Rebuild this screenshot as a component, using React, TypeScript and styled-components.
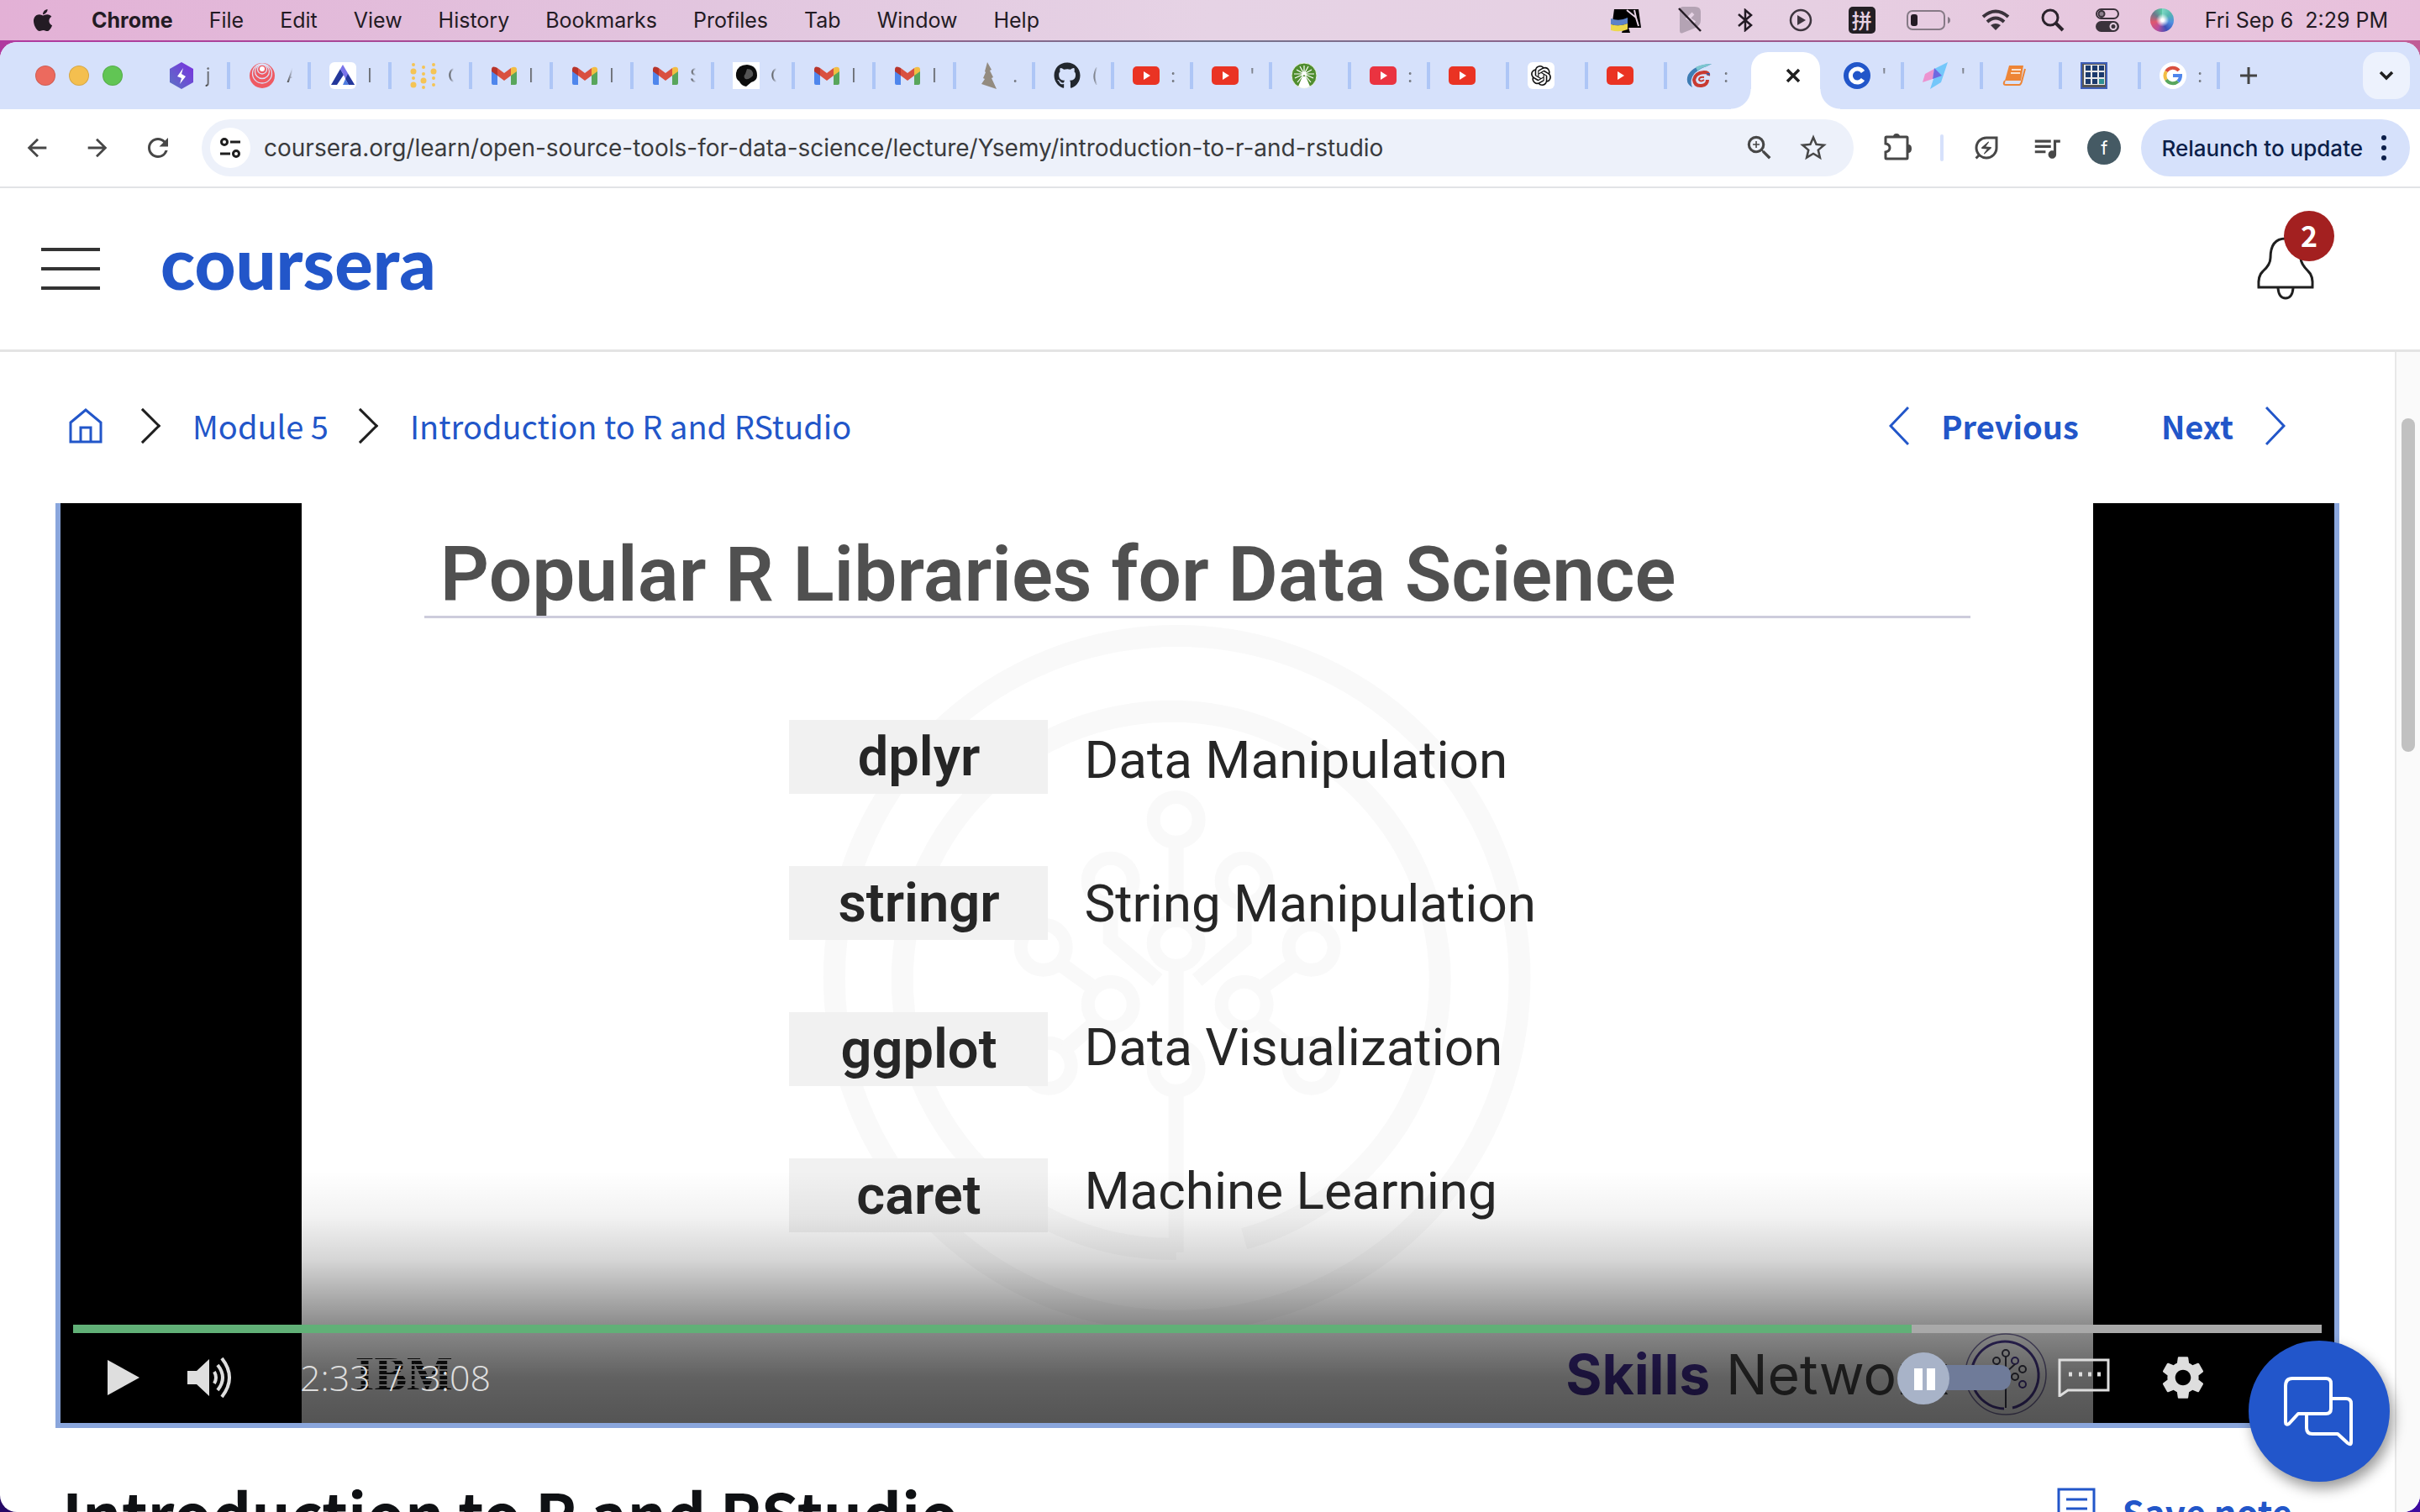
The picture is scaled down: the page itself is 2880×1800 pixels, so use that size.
import React from "react";
import styled, { createGlobalStyle } from "styled-components";
import {
  MdArrowBack,
  MdArrowForward,
  MdOutlineEnergySavingsLeaf,
  MdQueueMusic,
  MdRefresh,
  MdSettings,
  MdStarOutline,
  MdZoomIn,
} from "react-icons/md";
import { FaApple, FaGithub } from "react-icons/fa";
import { SiOpenai } from "react-icons/si";

const uiFont = `Inter, "Liberation Sans", sans-serif`;
const pageFont = `"Noto Sans CJK SC", "Noto Sans", sans-serif`;
const slideFont = `Roboto, "Noto Sans", sans-serif`;
const blue = "#2256c9";

const GlobalStyle = createGlobalStyle`
  *, *::before, *::after { box-sizing: border-box; }
  body { margin: 0; background: #2b0d6b; font-family: ${uiFont}; }
  button, input { font: inherit; color: inherit; }
  button { padding: 0; border: 0; background: none; cursor: pointer; }
  h1, h2, p, ol { margin: 0; padding: 0; }
  a { color: inherit; text-decoration: none; }
  svg { display: block; flex: none; }
`;

const Desktop = styled.div`
  height: 100vh;
  display: flex;
  flex-direction: column;
  overflow: hidden;
  background: linear-gradient(90deg, #b0399f, #a0568c 30%, #74748c 50%, #a0568c 75%, #c15c96) top / 100% 90px no-repeat,
    linear-gradient(90deg, #260a66, #3c0aa0);
`;

/* ---------- system menu bar ---------- */

const MenuBar = styled.header`
  flex: none;
  height: 48px;
  display: flex;
  align-items: center;
  justify-content: space-between;
  padding: 0 38px 0 36px;
  font-size: 25px;
  color: #231b24;
  background: linear-gradient(90deg, #e3b1d6, #e2c6df 30%, #e6d3e5 50%, #e6cfe2 75%, #e8bfdb);
`;

const MenuGroup = styled.div<{ $gap: number }>`
  display: flex;
  align-items: center;
  gap: ${(p) => p.$gap}px;
`;

const MenuItem = styled.button<{ $strong?: boolean }>`
  line-height: 32px;
  font-weight: ${(p) => (p.$strong ? 700 : 400)};
`;

const InputSource = styled.span`
  width: 32px;
  height: 32px;
  display: grid;
  place-items: center;
  border-radius: 5px;
  background: #231f24;
  color: #e8d3e4;
  font: 500 24px/32px ${pageFont};
`;

const Battery = styled.span`
  width: 46px;
  height: 24px;
  padding: 3px;
  border: 2px solid #867a86;
  border-radius: 7px;
  &::before {
    content: "";
    display: block;
    width: 8px;
    height: 14px;
    border-radius: 3px;
    background: #231b24;
  }
`;

const Siri = styled.span`
  width: 28px;
  height: 28px;
  border-radius: 50%;
  background: radial-gradient(circle at 52% 50%, #fff 0 8%, transparent 38%),
    conic-gradient(#7fd9c4, #55b7b0, #4f8fe0, #3d4fb8, #b84e9c, #e0566e, #6b7a8c, #58c8a6);
`;

/* ---------- browser chrome ---------- */

const BrowserWindow = styled.div`
  flex: 1;
  min-height: 0;
  margin-top: 2px;
  display: flex;
  flex-direction: column;
  overflow: hidden;
  border-radius: 20px;
  background: #fff;
`;

const TabStrip = styled.div`
  flex: none;
  height: 80px;
  display: flex;
  align-items: center;
  padding: 0 12px 0 42px;
  background: #d6e1fb;
`;

const WindowButtons = styled.div`
  display: flex;
  gap: 16px;
  margin-right: 32px;
`;

const WindowButton = styled.button<{ $color: string }>`
  width: 24px;
  height: 24px;
  border-radius: 50%;
  border: 1px solid rgba(0, 0, 0, 0.12);
  background: ${(p) => p.$color};
`;

const TabButton = styled.button<{ $wide?: boolean; $divider: boolean }>`
  width: ${(p) => (p.$wide ? 96 : 94)}px;
  height: 32px;
  display: flex;
  align-items: center;
  gap: 10px;
  padding-left: 22px;
  border-right: 4px solid ${(p) => (p.$divider ? "#aec6f6" : "transparent")};
`;

const TabTitle = styled.span`
  width: 10px;
  overflow: hidden;
  padding-left: 3px;
  text-align: left;
  white-space: nowrap;
  font-size: 23px;
  line-height: 32px;
  color: #444;
  mask-image: linear-gradient(90deg, #000 40%, transparent);
`;

const ActiveTab = styled.div`
  align-self: flex-end;
  position: relative;
  width: 82px;
  height: 68px;
  margin: 0 6px;
  display: flex;
  align-items: center;
  justify-content: flex-end;
  padding: 0 21px 12px 0;
  border-radius: 20px 20px 0 0;
  background: #fff;
  &::before,
  &::after {
    content: "";
    position: absolute;
    bottom: 0;
    width: 24px;
    height: 24px;
  }
  &::before {
    right: 100%;
    background: radial-gradient(circle at 0 0, transparent 23px, #fff 24px);
  }
  &::after {
    left: 100%;
    background: radial-gradient(circle at 100% 0, transparent 23px, #fff 24px);
  }
`;

const NewTab = styled.button`
  width: 56px;
  display: grid;
  place-items: center;
  margin-left: 6px;
  color: #444;
`;

const TabSearch = styled.button`
  width: 56px;
  height: 56px;
  margin-left: auto;
  display: grid;
  place-items: center;
  border-radius: 18px;
  background: #edf2fd;
  color: #1f1f1f;
`;

const Toolbar = styled.div`
  flex: none;
  height: 94px;
  display: flex;
  align-items: center;
  gap: 24px;
  padding: 0 12px 0 20px;
  border-bottom: 2px solid #e2e3e6;
  color: #474747;
`;

const ToolButton = styled.button`
  width: 48px;
  height: 48px;
  display: grid;
  place-items: center;
`;

const AddressBar = styled.form`
  flex: 1;
  height: 68px;
  margin: 0 4px;
  display: flex;
  align-items: center;
  gap: 16px;
  padding: 0 24px 0 10px;
  border-radius: 34px;
  background: #edf1fa;
`;

const SiteInfo = styled(ToolButton)`
  border-radius: 50%;
  background: #fff;
  color: #1f1f1f;
`;

const AddressInput = styled.input`
  flex: 1;
  min-width: 0;
  padding: 0;
  border: 0;
  outline: 0;
  background: none;
  font-size: 28px;
  line-height: 40px;
  color: #3a3b3d;
`;

const ToolDivider = styled.span`
  width: 4px;
  height: 32px;
  margin: 0 3px;
  border-radius: 2px;
  background: #d6e1fb;
`;

const Avatar = styled(ToolButton)`
  width: 40px;
  height: 40px;
  border-radius: 50%;
  background: #455a64;
  color: #fff;
  font-size: 22px;
`;

const Relaunch = styled.button`
  height: 68px;
  display: flex;
  align-items: center;
  gap: 22px;
  padding: 0 28px 0 24px;
  border-radius: 34px;
  background: #d6e1fb;
  color: #0c1f4a;
  font-size: 26px;
  font-weight: 500;
  white-space: nowrap;
`;

/* ---------- course page ---------- */

const SiteHeader = styled.header`
  flex: none;
  height: 195px;
  display: flex;
  align-items: center;
  gap: 72px;
  padding: 0 124px 0 49px;
  border-bottom: 3px solid #e4e4e4;
`;

const MenuToggle = styled.button`
  width: 70px;
  display: flex;
  flex-direction: column;
  gap: 19px;
`;

const MenuLine = styled.span`
  height: 4px;
  background: #333;
`;

const Logo = styled.a`
  padding-bottom: 16px;
  font: 900 85px/100px Lato, sans-serif;
  color: ${blue};
`;

const Notifications = styled.button`
  position: relative;
  margin-left: auto;
  color: #1f1f1f;
`;

const Badge = styled.span`
  position: absolute;
  left: 34px;
  top: -30px;
  width: 60px;
  height: 60px;
  border-radius: 50%;
  background: #a32020;
  color: #fff;
  font: 700 34px/58px ${pageFont};
  text-align: center;
`;

const PageBody = styled.div`
  flex: 1;
  min-height: 0;
  display: flex;
  font-family: ${pageFont};
`;

const Main = styled.main`
  flex: 1;
  min-width: 0;
  overflow: hidden;
  padding: 0 66px;
`;

const ScrollTrack = styled.div`
  width: 30px;
  padding: 79px 5px 0 6px;
  border-left: 2px solid #e8e8e8;
  background: #fafafa;
`;

const ScrollThumb = styled.div`
  width: 16px;
  height: 397px;
  border-radius: 8px;
  background: #c1c1c1;
`;

const LessonNav = styled.nav`
  height: 180px;
  display: flex;
  align-items: center;
  justify-content: space-between;
  padding: 0 64px 4px 16px;
  font-size: 38px;
  line-height: 56px;
  color: ${blue};
`;

const Crumbs = styled.ol`
  display: flex;
  align-items: center;
  list-style: none;
`;

const Crumb = styled.li`
  display: flex;
  align-items: center;
  & + &::before {
    content: "";
    width: 30px;
    height: 30px;
    margin: 0 44px 0 23px;
    border: solid #1f1f1f;
    border-width: 3px 3px 0 0;
    transform: rotate(45deg);
  }
`;

const HomeLink = styled.a`
  padding-right: 10px;
`;

const Pager = styled.div`
  display: flex;
  gap: 98px;
`;

const PagerLink = styled.a`
  display: flex;
  align-items: center;
  gap: 38px;
  font-weight: 700;
`;

const Player = styled.section`
  position: relative;
  display: flex;
  justify-content: center;
  border: solid #8aa6dc;
  border-width: 0 6px 6px;
  background: #000;
`;

const Slide = styled.article`
  position: relative;
  width: 78.8%;
  aspect-ratio: 2133 / 1095;
  overflow: hidden;
  background: #fff;
  font-family: ${slideFont};
  color: #262626;
`;

const Watermark = styled.svg`
  position: absolute;
  inset: 0;
  width: 100%;
  height: 100%;
`;

const SlideTitle = styled.h2`
  position: relative;
  margin: 36px 146px 0;
  padding: 0 19px;
  border-bottom: 3px solid #cdccdc;
  font-size: 91px;
  line-height: 98px;
  font-weight: 600;
  color: #505050;
  white-space: nowrap;
`;

const Libraries = styled.div`
  position: relative;
  display: flex;
  justify-content: center;
  gap: 43px;
  padding-top: 121px;
`;

const Names = styled.ul`
  width: 308px;
  margin: 0;
  padding: 0;
  display: flex;
  flex-direction: column;
  gap: 86px;
  list-style: none;
`;

const Name = styled.li`
  background: #f1f1f1;
  font-size: 65px;
  line-height: 88px;
  font-weight: 600;
  text-align: center;
`;

const Uses = styled(Names)`
  width: 620px;
  padding-top: 4px;
  gap: 83px;
`;

const Use = styled.li`
  font-size: 62px;
  line-height: 88px;
  white-space: nowrap;
`;

const SlideFooter = styled.footer`
  position: absolute;
  left: 64px;
  right: 54px;
  bottom: 8px;
  display: flex;
  align-items: center;
`;

const Ibm = styled.span`
  margin-right: auto;
  font: 700 58px/80px "Liberation Serif", serif;
  color: transparent;
  background: repeating-linear-gradient(#1a1a1a 0 4px, transparent 4px 6px);
  background-clip: text;
`;

const Skills = styled.span`
  margin-right: 18px;
  font: 400 66px/80px ${uiFont};
  color: #474747;
  strong {
    color: #442f96;
  }
`;

const Shade = styled.div`
  position: absolute;
  inset: auto 0 0;
  height: 300px;
  background: linear-gradient(
    transparent,
    rgba(0, 0, 0, 0.05) 18%,
    rgba(0, 0, 0, 0.16) 35%,
    rgba(0, 0, 0, 0.45) 61%,
    rgba(0, 0, 0, 0.62) 82%,
    rgba(0, 0, 0, 0.67)
  );
`;

const Controls = styled.div`
  position: absolute;
  inset: auto 15px 0;
  color: #dedede;
`;

const Seek = styled.input`
  display: block;
  width: 100%;
  height: 10px;
  margin: 0;
  appearance: none;
  background: linear-gradient(90deg, #61b077 var(--played), #a9a9a9 var(--played));
  &::-webkit-slider-thumb {
    appearance: none;
    width: 0;
    height: 0;
  }
`;

const ControlRow = styled.div`
  height: 107px;
  display: flex;
  align-items: center;
  gap: 56px;
  padding: 0 134px 0 40px;
`;

const Time = styled.span`
  margin: 0 auto 0 20px;
  font: 300 43px/56px "Open Sans", sans-serif;
  white-space: pre;
`;

const AutoPlay = styled.input`
  appearance: none;
  position: relative;
  width: 104px;
  height: 30px;
  margin: 0;
  border-radius: 0 12px 12px 0;
  background: #6f7b99;
  &::before {
    content: "";
    position: absolute;
    left: -31px;
    top: -15px;
    width: 62px;
    height: 62px;
    border-radius: 50%;
    background: linear-gradient(#fff, #fff) 20px 19px / 10px 26px no-repeat,
      linear-gradient(#fff, #fff) 35px 19px / 10px 26px no-repeat, #a8b3c8;
  }
`;

const LessonHeading = styled.div`
  display: flex;
  align-items: center;
  justify-content: space-between;
  margin-top: 56px;
  padding: 0 56px 0 8px;
`;

const LessonTitle = styled.h1`
  font-size: 73px;
  line-height: 88px;
  font-weight: 700;
  color: #0f1114;
  white-space: nowrap;
`;

const SaveNote = styled.button`
  display: flex;
  align-items: center;
  gap: 32px;
  font-size: 42px;
  line-height: 56px;
  font-weight: 700;
  color: ${blue};
`;

const ChatButton = styled.button`
  position: fixed;
  right: 36px;
  bottom: 36px;
  width: 168px;
  height: 168px;
  display: grid;
  place-items: center;
  border-radius: 50%;
  background: #2256cb;
  color: #fff;
  box-shadow: 4px 8px 16px rgba(0, 0, 0, 0.4);
`;

/* ---------- favicons ---------- */

const Fav = ({ children }: { children: React.ReactNode }) => (
  <svg width="32" height="32" viewBox="0 0 32 32" fill="none">
    {children}
  </svg>
);

const Bolt = () => (
  <Fav>
    <defs>
      <linearGradient id="bolt" x1="1" y1="0" x2="0" y2="1">
        <stop stopColor="#7a2fe0" />
        <stop offset="1" stopColor="#5b73c4" />
      </linearGradient>
    </defs>
    <path d="M16 0l14 8v16l-14 8-14-8V8z" fill="url(#bolt)" />
    <path d="M18 7l-7 10 5 2-2 7 7-9-5-3z" fill="#fff" />
  </Fav>
);

const Rings = () => (
  <Fav>
    <circle cx="16" cy="16" r="15" fill="#ef5a63" />
    <g stroke="#dbe0f6" strokeWidth="1.3">
      <circle cx="16" cy="13.500" r="11.500" />
      <circle cx="16" cy="11" r="8.500" />
      <circle cx="16" cy="8.500" r="5.500" />
    </g>
    <circle cx="16" cy="8" r="3" fill="#fff" />
  </Fav>
);

const Lambda = () => (
  <Fav>
    <rect width="32" height="32" rx="6" fill="#fff" />
    <path d="M13 8l4 7-8 12H2z" fill="#24389b" />
    <path d="M16 3l14 24h-7L13 8z" fill="#7a74ea" />
    <path d="M22 14l8 13h-7l-4-7z" fill="#24389b" />
    <path d="M19 20l4 7h-7z" fill="#4f7de0" />
  </Fav>
);

const Dots = () => (
  <Fav>
    <g fill="#f5c455">
      <circle cx="4" cy="3" r="2" />
      <circle cx="4" cy="11" r="3.500" />
      <circle cx="4" cy="19" r="2" />
      <circle cx="4" cy="27" r="3.500" />
      <circle cx="16" cy="6" r="2" />
      <circle cx="16" cy="14" r="2" />
      <circle cx="16" cy="22" r="3.500" />
      <circle cx="16" cy="30" r="2" />
      <circle cx="28" cy="3" r="2" />
      <circle cx="28" cy="11" r="3.500" />
      <circle cx="28" cy="19" r="2" />
      <circle cx="28" cy="27" r="2" />
    </g>
  </Fav>
);

const Gmail = () => (
  <Fav>
    <path d="M1 9l7 5v13H3q-2 0-2-2z" fill="#4f86ec" />
    <path d="M31 9l-7 5v13h5q2 0 2-2z" fill="#58a65c" />
    <path d="M24 7l2-1q5-1 5 3v2l-7 5z" fill="#f2bd42" />
    <path d="M1 9q0-5 5-3l2 1v9l-7-5z" fill="#b8342b" />
    <path d="M8 7l8 6 8-6v9l-8 6-8-6z" fill="#d95040" />
  </Fav>
);

const Brain = () => (
  <Fav>
    <path d="M0 0h32v32H0z" fill="#fff" />
    <path d="M4 13Q6 3 17 3q12 1 12 13 0 6-7 8l-6 5q-6-1-8-6-5-3-4-10z" fill="#0c0c0c" />
    <path d="M17 8q8 0 7 8-4 5-9 4-3-3 0-6z" fill="#555" />
  </Fav>
);

const Tree = () => (
  <Fav>
    <path d="M15 0l5 9-2 1 4 8-2 1 6 13-18-6 4-6-2-1 3-7-1-1z" fill="#938b80" />
  </Fav>
);

const YouTube = ({ fill = "#ea3323" }: { fill?: string }) => (
  <Fav>
    <rect y="5" width="32" height="22" rx="5" fill={fill} />
    <path d="M13 11l8 5-8 5z" fill="#fff" />
  </Fav>
);

const Sunburst = () => (
  <Fav>
    <circle cx="16" cy="16" r="15" fill="#4f8d2f" stroke="#e9f3e2" strokeWidth="1" />
    <path
      d="M16 14V4M16 14l5-9M16 14l-5-9M16 14l9-5M16 14L7 9M16 14l12 0M16 14H4M16 14l11 5M16 14L5 19M16 14l8 10M16 14L8 24"
      stroke="#fff"
      strokeWidth="1.2"
    />
    <path d="M14 17h4l5 12q-7 4-14 0z" fill="#fff" />
  </Fav>
);

const OpenAiTile = () => (
  <Fav>
    <rect width="32" height="32" rx="6" fill="#fff" />
    <SiOpenai x="4" y="4" size={24} color="#111" />
  </Fav>
);

const Swirl = () => (
  <Fav>
    <path d="M31 2Q10 3 3 15q-4 10 5 15Q4 21 11 13q7-6 14-8z" fill="#3f7db4" />
    <path d="M31 2Q20 2 12 6l2 4q6-4 11-5z" fill="#7cc6cf" />
    <path d="M27 16q1-4-5-4-11 1-12 9 1 8 9 7 7-1 7-7" stroke="#c83a31" strokeWidth="4" />
    <path d="M22 18q-6-1-6 3 2 3 6 0" stroke="#c83a31" strokeWidth="2" />
    <path d="M24 13l5 0-1 3z" fill="#2f5aa8" />
  </Fav>
);

const CourseraTile = () => (
  <Fav>
    <circle cx="16" cy="16" r="16" fill="#2256c9" />
    <path d="M23 11.500a8 8 0 1 0 0 9" stroke="#fff" strokeWidth="5" />
  </Fav>
);

const Prism = () => (
  <Fav>
    <path d="M14 8L30 0l-8 24-13 8 5-15z" fill="#74c7fa" />
    <path d="M14 8L3 14 0 24l12-4z" fill="#ec93cf" />
    <path d="M14 7l9 9-11 4z" fill="#6f68e0" />
  </Fav>
);

const Book = () => (
  <Fav>
    <path d="M9 4h17l-3 18H4z" fill="#ee8536" />
    <path d="M12 9h11M11 13h11" stroke="#fff" strokeWidth="1.500" />
    <path d="M4 22q-3 5 1 5h16q2 0 3-4l4-15" stroke="#ee8536" strokeWidth="2" />
  </Fav>
);

const GridTile = () => (
  <Fav>
    <path d="M0 0h32v32H0z" fill="#3f5fb8" />
    <path d="M2 2h28v28H2z" fill="#555" />
    <path d="M4 3h25v24H4z" fill="#e8e8e8" />
    <path
      d="M6 4h6v6H6zM14 4h6v6h-6zM22 4h6v6h-6zM6 12h6v6H6zM14 12h6v6h-6zM22 12h6v6h-6zM6 20h6v6H6zM14 20h6v6h-6z"
      fill="#1c3a6c"
    />
    <path d="M22 20h6v6h-6z" fill="#2e8f93" />
  </Fav>
);

const Google = () => (
  <Fav>
    <circle cx="16" cy="16" r="16" fill="#fff" />
    <g strokeWidth="4">
      <path d="M23 10A9.500 9.500 0 0 0 8 11" stroke="#d95040" />
      <path d="M8 11a9.500 9.500 0 0 0 0 10" stroke="#f2bd42" />
      <path d="M8 21a9.500 9.500 0 0 0 14 2" stroke="#58a65c" />
      <path d="M22 23a9.500 9.500 0 0 0 3-7h-9" stroke="#4f86ec" />
    </g>
  </Fav>
);

type TabInfo = { icon: React.ReactNode; title: string; label: string };

const tabs: TabInfo[] = [
  { icon: <Bolt />, title: "j", label: "Editor" },
  { icon: <Rings />, title: "A", label: "Rings" },
  { icon: <Lambda />, title: "I", label: "Lambda" },
  { icon: <Dots />, title: "C", label: "Dots" },
  { icon: <Gmail />, title: "I", label: "Mail" },
  { icon: <Gmail />, title: "I", label: "Mail" },
  { icon: <Gmail />, title: "S", label: "Mail" },
  { icon: <Brain />, title: "C", label: "Brain" },
  { icon: <Gmail />, title: "I", label: "Mail" },
  { icon: <Gmail />, title: "I", label: "Mail" },
  { icon: <Tree />, title: ".", label: "Tree" },
  { icon: <FaGithub size={32} color="#22272e" />, title: "(", label: "GitHub" },
  { icon: <YouTube />, title: ":", label: "Video" },
  { icon: <YouTube />, title: "'", label: "Video" },
  { icon: <Sunburst />, title: "", label: "Sunburst" },
  { icon: <YouTube fill="#ea3340" />, title: ":", label: "Video" },
  { icon: <YouTube />, title: "", label: "Video" },
  { icon: <OpenAiTile />, title: "", label: "Assistant" },
  { icon: <YouTube />, title: "", label: "Video" },
  { icon: <Swirl />, title: ":", label: "Swirl" },
];

const laterTabs: TabInfo[] = [
  { icon: <CourseraTile />, title: "'", label: "Course" },
  { icon: <Prism />, title: "'", label: "Prism" },
  { icon: <Book />, title: "", label: "Book" },
  { icon: <GridTile />, title: "", label: "Grid" },
  { icon: <Google />, title: ":", label: "Search" },
];

const Tab = ({ tab, wide, divider }: { tab: TabInfo; wide?: boolean; divider: boolean }) => (
  <TabButton $wide={wide} $divider={divider} aria-label={tab.label}>
    {tab.icon}
    <TabTitle>{tab.title}</TabTitle>
  </TabButton>
);

/* ---------- drawings ---------- */

const Arrow = ({ left }: { left?: boolean }) => (
  <svg width="24" height="46" viewBox="0 0 24 46" fill="none" stroke="currentColor" strokeWidth="3">
    <path d={left ? "M23 1L2 23l21 22" : "M1 1l21 22L1 45"} />
  </svg>
);

const nodes = [
  [1041, 377],
  [963, 450],
  [1122, 450],
  [883, 529],
  [1041, 524],
  [1202, 529],
  [963, 597],
  [1122, 597],
  [889, 670],
  [1041, 673],
  [1202, 670],
];

const SlideMark = () => (
  <Watermark viewBox="0 0 2133 1095" fill="none" stroke="#f9f9f9" strokeWidth="22" aria-hidden="true">
    <circle cx="1042" cy="566" r="408" strokeWidth="26" />
    <path d="M1041 888A320 320 0 1 1 1122 876" strokeWidth="26" />
    {nodes.map(([x, y]) => (
      <circle key={`${x}-${y}`} cx={x} cy={y} r="27" strokeWidth="16" />
    ))}
    <path
      d="M1041 406v90M1041 553v90M1041 702v190M963 480v40l56 48M1122 480v40l-56 48M905 550l36 26M1180 550l-36 26M941 622l-32 28M1144 622l36 28"
      strokeWidth="18"
    />
  </Watermark>
);

const NetworkMark = () => (
  <svg width="100" height="100" viewBox="0 0 100 100" fill="none" stroke="#4a3a90" strokeWidth="2">
    <circle cx="50" cy="50" r="48" stroke="#7c74a4" strokeWidth="1.500" />
    <path d="M48 91A40 40 0 1 1 58 90" strokeWidth="3" />
    <g stroke="#3f3f50">
      <circle cx="50" cy="25" r="4" />
      <circle cx="39" cy="34" r="4" />
      <circle cx="61" cy="34" r="4" stroke="#4a3a90" />
      <circle cx="30" cy="44" r="4" />
      <circle cx="70" cy="44" r="4" />
      <circle cx="39" cy="53" r="4" />
      <circle cx="61" cy="53" r="4" />
      <circle cx="30" cy="62" r="4" />
      <circle cx="70" cy="62" r="4" stroke="#4a3a90" />
      <path d="M50 29v61M39 38l11 10M61 38L50 48" />
    </g>
  </svg>
);

export default function App() {
  const played = 153.7;
  const duration = 188;
  return (
    <Desktop>
      <GlobalStyle />
      <MenuBar>
        <MenuGroup $gap={43}>
          <FaApple size={30} />
          <MenuItem $strong>Chrome</MenuItem>
          {["File", "Edit", "View", "History", "Bookmarks", "Profiles", "Tab", "Window", "Help"].map((m) => (
            <MenuItem key={m}>{m}</MenuItem>
          ))}
        </MenuGroup>
        <MenuGroup $gap={37}>
          <MenuGroup $gap={43}>
            <svg width="38" height="32" viewBox="0 0 38 32">
              <path d="M5 3h29l3 22H22l2 6H14l2-6H2z" fill="#000" />
              <path d="M20 4l11 9-2-9M31 13l3 10" stroke="#e6d3e5" strokeWidth="2" fill="none" />
              <path d="M1 14q10 4 20-1v7q-10 4-20 1z" fill="#5b82c8" />
              <path d="M1 21q10 3 20-1v7q-10 4-20 1z" fill="#ecd84c" />
            </svg>
            <svg width="28" height="32" viewBox="0 0 28 32">
              <path d="M6 0h14q7 0 7 6v10q0 6-6 9L6 31q-4 2-4-3V4q0-4 4-4z" fill="#b4a3b4" />
              <path d="M18 8l-6 6 8 5" stroke="#e6d3e5" strokeWidth="4" fill="none" />
              <path d="M1 2l26 27" stroke="#231b24" strokeWidth="2.500" />
            </svg>
            <svg width="18" height="28" viewBox="0 0 18 28" fill="none" stroke="#231b24" strokeWidth="2.500">
              <path d="M1 7l15 13-7 6V2l7 6L1 21" />
            </svg>
            <svg width="28" height="28" viewBox="0 0 28 28">
              <circle cx="14" cy="14" r="12" fill="none" stroke="#3d353e" strokeWidth="2.500" />
              <path d="M10 8l10 6-10 6z" fill="#3d353e" />
            </svg>
            <InputSource>拼</InputSource>
          </MenuGroup>
          <MenuGroup $gap={3}>
            <Battery />
            <svg width="3" height="8" viewBox="0 0 3 8">
              <path d="M0 0q3 1 3 4T0 8z" fill="#867a86" />
            </svg>
          </MenuGroup>
          <svg width="34" height="26" viewBox="0 0 34 26" fill="none" stroke="#3a323b" strokeWidth="4">
            <path d="M2 9q15-13 30 0M7 15q10-9 20 0" />
            <path d="M17 25l-6-6q6-4 12 0z" fill="#3a323b" stroke="none" />
          </svg>
          <svg width="28" height="28" viewBox="0 0 28 28" fill="none" stroke="#2b232c" strokeWidth="3">
            <circle cx="11" cy="11" r="9" />
            <path d="M17 17l9 9" strokeWidth="4" />
          </svg>
          <svg width="28" height="28" viewBox="0 0 28 28" fill="none" stroke="#3a323b" strokeWidth="2">
            <rect x="1" y="1" width="26" height="11" rx="5.500" />
            <circle cx="7" cy="6.500" r="3.500" fill="#8b7f8c" />
            <rect x="1" y="16" width="26" height="11" rx="5.500" fill="#3a323b" />
            <circle cx="21" cy="21.500" r="3.500" stroke="#e6cfe2" />
          </svg>
          <Siri />
          <MenuItem>Fri Sep 6&nbsp; 2:29 PM</MenuItem>
        </MenuGroup>
      </MenuBar>

      <BrowserWindow>
        <TabStrip>
          <WindowButtons>
            <WindowButton $color="#ec6a5e" aria-label="Close window" />
            <WindowButton $color="#f4bf4f" aria-label="Minimise window" />
            <WindowButton $color="#61c554" aria-label="Zoom window" />
          </WindowButtons>
          {tabs.map((t, i) => (
            <Tab key={i} tab={t} wide={i < 10} divider={i < tabs.length - 1} />
          ))}
          <ActiveTab>
            <button aria-label="Close tab">
              <svg width="22" height="22" viewBox="0 0 22 22" stroke="#1f1f1f" strokeWidth="3.500">
                <path d="M4 4l14 14M18 4L4 18" />
              </svg>
            </button>
          </ActiveTab>
          {laterTabs.map((t, i) => (
            <Tab key={i} tab={t} divider />
          ))}
          <NewTab aria-label="New tab">
            <svg width="20" height="20" viewBox="0 0 20 20" stroke="currentColor" strokeWidth="3">
              <path d="M10 0v20M0 10h20" />
            </svg>
          </NewTab>
          <TabSearch aria-label="Search tabs">
            <svg width="18" height="12" viewBox="0 0 18 12" fill="none" stroke="currentColor" strokeWidth="3.500">
              <path d="M2 2l7 7 7-7" />
            </svg>
          </TabSearch>
        </TabStrip>

        <Toolbar>
          <ToolButton aria-label="Back">
            <MdArrowBack size={34} />
          </ToolButton>
          <ToolButton aria-label="Forward">
            <MdArrowForward size={34} />
          </ToolButton>
          <ToolButton aria-label="Reload">
            <MdRefresh size={36} />
          </ToolButton>
          <AddressBar onSubmit={(e) => e.preventDefault()}>
            <SiteInfo type="button" aria-label="Site information">
              <svg width="26" height="26" viewBox="0 0 26 26" fill="none" stroke="currentColor" strokeWidth="3">
                <circle cx="6" cy="6" r="3.500" />
                <path d="M13 6h12M1 20h12" />
                <circle cx="20" cy="20" r="3.500" />
              </svg>
            </SiteInfo>
            <AddressInput
              aria-label="Address"
              defaultValue="coursera.org/learn/open-source-tools-for-data-science/lecture/Ysemy/introduction-to-r-and-rstudio"
            />
            <ToolButton type="button" aria-label="Zoom">
              <MdZoomIn size={38} />
            </ToolButton>
            <ToolButton type="button" aria-label="Bookmark">
              <MdStarOutline size={38} />
            </ToolButton>
          </AddressBar>
          <ToolButton aria-label="Extensions">
            <svg width="34" height="34" viewBox="0 0 34 34" fill="none">
              <path
                d="M4 4h24q1 0 1 1v24q0 1-1 1H4q-1 0-1-1v-7q5-1 5-5t-5-5V5q0-1 1-1z"
                stroke="currentColor"
                strokeWidth="3"
              />
              <path d="M12 4q0-4 4-4t4 4zM30 13q4 0 4 5t-4 5z" fill="currentColor" />
            </svg>
          </ToolButton>
          <ToolDivider />
          <ToolButton aria-label="Energy saver">
            <MdOutlineEnergySavingsLeaf size={36} />
          </ToolButton>
          <ToolButton aria-label="Media">
            <MdQueueMusic size={38} />
          </ToolButton>
          <Avatar aria-label="Profile">f</Avatar>
          <Relaunch>
            Relaunch to update
            <svg width="6" height="34" viewBox="0 0 6 34" fill="currentColor">
              <circle cx="3" cy="5" r="3" />
              <circle cx="3" cy="17" r="3" />
              <circle cx="3" cy="29" r="3" />
            </svg>
          </Relaunch>
        </Toolbar>

        <SiteHeader>
          <MenuToggle aria-label="Menu">
            <MenuLine />
            <MenuLine />
            <MenuLine />
          </MenuToggle>
          <Logo href="#">coursera</Logo>
          <Notifications aria-label="Notifications, 2 unread">
            <svg width="72" height="78" viewBox="0 0 72 78" fill="none" stroke="currentColor" strokeWidth="3">
              <path d="M4 61h64q1-14-5-19-9-9-9-16Q54 3 36 3T18 26q0 8-9 16-6 5-5 19z" />
              <path d="M27 62q1 12 9 12t9-12" />
            </svg>
            <Badge>2</Badge>
          </Notifications>
        </SiteHeader>

        <PageBody>
          <Main>
            <LessonNav>
              <Crumbs>
                <Crumb>
                  <HomeLink href="#" aria-label="Home">
                    <svg width="40" height="42" viewBox="0 0 40 42" fill="none" stroke="currentColor" strokeWidth="3">
                      <path d="M2 17L20 2l18 15v23H2z" />
                      <path d="M14 40V23h12v17" />
                    </svg>
                  </HomeLink>
                </Crumb>
                <Crumb>
                  <a href="#">Module 5</a>
                </Crumb>
                <Crumb>
                  <a href="#">Introduction to R and RStudio</a>
                </Crumb>
              </Crumbs>
              <Pager>
                <PagerLink href="#">
                  <Arrow left />
                  Previous
                </PagerLink>
                <PagerLink href="#">
                  Next
                  <Arrow />
                </PagerLink>
              </Pager>
            </LessonNav>

            <Player>
              <Slide>
                <SlideMark />
                <SlideTitle>Popular R Libraries for Data Science</SlideTitle>
                <Libraries>
                  <Names>
                    {["dplyr", "stringr", "ggplot", "caret"].map((n) => (
                      <Name key={n}>{n}</Name>
                    ))}
                  </Names>
                  <Uses>
                    {["Data Manipulation", "String Manipulation", "Data Visualization", "Machine Learning"].map((u) => (
                      <Use key={u}>{u}</Use>
                    ))}
                  </Uses>
                </Libraries>
                <SlideFooter>
                  <Ibm>IBM</Ibm>
                  <Skills>
                    <strong>Skills</strong> Network
                  </Skills>
                  <NetworkMark />
                </SlideFooter>
              </Slide>
              <Shade />
              <Controls>
                <Seek
                  type="range"
                  aria-label="Seek"
                  min={0}
                  max={duration}
                  step="any"
                  defaultValue={played}
                  style={{ "--played": `${(played / duration) * 100}%` } as React.CSSProperties}
                />
                <ControlRow>
                  <button aria-label="Play">
                    <svg width="40" height="44" viewBox="0 0 40 44" fill="currentColor">
                      <path d="M1 1l38 21L1 43z" />
                    </svg>
                  </button>
                  <button aria-label="Mute">
                    <svg width="58" height="50" viewBox="0 0 58 50" fill="none" stroke="currentColor" strokeWidth="4">
                      <path d="M0 17h11L26 3v44L11 33H0z" fill="currentColor" stroke="none" />
                      <path d="M32 18q4 7 0 14M36 10q12 15 0 30M41 2q18 23 0 46" />
                    </svg>
                  </button>
                  <Time>{"2:33  /  3:08"}</Time>
                  <AutoPlay type="checkbox" role="switch" aria-label="Autoplay" />
                  <button aria-label="Captions">
                    <svg width="62" height="46" viewBox="0 0 62 46" fill="none" stroke="currentColor" strokeWidth="3">
                      <path d="M2 2h58v36H12l-10 7z" />
                      <path d="M13 19h4M25 19h4M36 19h4M47 19h4" strokeWidth="5" />
                    </svg>
                  </button>
                  <button aria-label="Settings">
                    <MdSettings size={62} />
                  </button>
                </ControlRow>
              </Controls>
            </Player>

            <LessonHeading>
              <LessonTitle>Introduction to R and RStudio</LessonTitle>
              <SaveNote>
                <svg width="46" height="58" viewBox="0 0 46 58" fill="none" stroke="currentColor" strokeWidth="3">
                  <path d="M2 2h42v54H2zM11 14h25M11 25h25M11 36h25" />
                </svg>
                Save note
              </SaveNote>
            </LessonHeading>
          </Main>
          <ScrollTrack>
            <ScrollThumb />
          </ScrollTrack>
        </PageBody>
      </BrowserWindow>

      <ChatButton aria-label="Open chat">
        <svg
          width="84"
          height="84"
          viewBox="0 0 84 84"
          fill="none"
          stroke="currentColor"
          strokeWidth="4"
          strokeLinejoin="round"
        >
          <path d="M10 3h40q6 0 6 6v30q0 6-6 6H17L6 57q-4 2-4-2V12q0-9 8-9z" />
          <path d="M58 27h16q6 0 6 6v46q0 4-4 1L64 69H34q-7 0-7-7V47" />
        </svg>
      </ChatButton>
    </Desktop>
  );
}
